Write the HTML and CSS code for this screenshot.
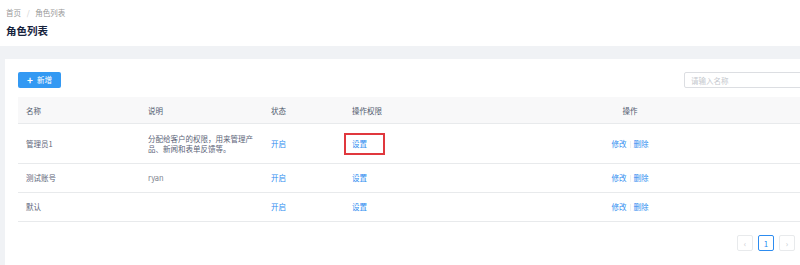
FILE: index.html
```html
<!DOCTYPE html>
<html lang="zh-CN">
<head>
    <meta charset="UTF-8">
    <meta name="viewport" content="width=device-width, initial-scale=1.0">
    <title>角色列表</title>
    <link rel="stylesheet" href="styles.css">
</head>
<body>
    <div class="page-header">
        <div class="breadcrumb">
            <span>首页</span>
            <span class="sep">/</span>
            <span>角色列表</span>
        </div>
        <h1 class="page-title">角色列表</h1>
    </div>

    <div class="card">
        <div class="toolbar">
            <button class="btn-primary"><span class="plus">+</span>新增</button>
            <input class="search" type="text" placeholder="请输入名称">
        </div>

        <table class="role-table">
            <colgroup>
                <col style="width: 122px">
                <col style="width: 123px">
                <col style="width: 81px">
                <col style="width: 116px">
                <col>
            </colgroup>
            <thead>
                <tr>
                    <th>名称</th>
                    <th>说明</th>
                    <th>状态</th>
                    <th>操作权限</th>
                    <th class="center">操作</th>
                </tr>
            </thead>
            <tbody>
                <tr class="tall">
                    <td>管理员1</td>
                    <td>分配给客户的权限，用来管理产品、新闻和表单反馈等。</td>
                    <td><a class="link">开启</a></td>
                    <td><span class="highlight"><a class="link">设置</a></span></td>
                    <td class="center"><a class="link">修改</a><span class="divider"></span><a class="link">删除</a></td>
                </tr>
                <tr>
                    <td>测试账号</td>
                    <td class="muted">ryan</td>
                    <td><a class="link">开启</a></td>
                    <td><a class="link">设置</a></td>
                    <td class="center"><a class="link">修改</a><span class="divider"></span><a class="link">删除</a></td>
                </tr>
                <tr>
                    <td>默认</td>
                    <td></td>
                    <td><a class="link">开启</a></td>
                    <td><a class="link">设置</a></td>
                    <td class="center"><a class="link">修改</a><span class="divider"></span><a class="link">删除</a></td>
                </tr>
            </tbody>
        </table>

        <div class="pager">
            <span class="page-item">&lsaquo;</span>
            <span class="page-item active">1</span>
            <span class="page-item">&rsaquo;</span>
        </div>
    </div>
</body>
</html>
```

FILE: styles.css
```css
body {
    margin: 0;
    width: 800px;
    height: 265px;
    overflow: hidden;
    background: #f0f2f5;
    font-family: "Noto Sans CJK SC", "Noto Sans", sans-serif;
    font-size: 7.5px;
    color: #5c6478;
}
.page-header {
    background: #fff;
    height: 46px;
    padding: 8px 6px 0;
    box-sizing: border-box;
}
.breadcrumb {
    color: #999;
    line-height: 9px;
    height: 9px;
}
.breadcrumb .sep {
    margin: 0 4px;
    color: #ccc;
}
.page-title {
    margin: 8px 0 0;
    font-size: 10.5px;
    line-height: 12px;
    font-weight: bold;
    color: #17233d;
}
.card {
    background: #fff;
    margin: 13px 0 0 5px;
    width: 795px;
    height: 206px;
    padding: 13px 0 0 13px;
    box-sizing: border-box;
    overflow: hidden;
}
.toolbar {
    display: flex;
    justify-content: space-between;
    align-items: center;
    width: 792px;
    height: 16px;
}
.btn-primary {
    width: 43px;
    height: 16px;
    flex-shrink: 0;
    padding: 0;
    border: none;
    border-radius: 2px;
    background: #3399f3;
    color: #fff;
    font-family: inherit;
    font-size: 7.5px;
    line-height: 16px;
    display: flex;
    align-items: center;
    justify-content: center;
}
.btn-primary .plus {
    font-size: 10px;
    font-weight: bold;
    margin-right: 4px;
}
.search {
    width: 126px;
    height: 16px;
    flex-shrink: 0;
    box-sizing: border-box;
    border: 1px solid #dcdee2;
    border-radius: 2px;
    padding: 0 6px;
    font-family: inherit;
    font-size: 7.5px;
    outline: none;
}
.search::placeholder {
    color: #c5c8ce;
}
.role-table {
    margin-top: 9px;
    width: 782px;
    border-collapse: collapse;
    table-layout: fixed;
}
.role-table th {
    background: #f8f8f9;
    height: 26px;
    padding: 0 8px;
    text-align: left;
    font-weight: normal;
    color: #515a6e;
    border-bottom: 1px solid #e8eaec;
}
.role-table td {
    height: 28px;
    padding: 0 8px;
    line-height: 10px;
    border-bottom: 1px solid #e8eaec;
    vertical-align: middle;
}
.role-table tr.tall td {
    height: 39px;
}
.role-table .center {
    text-align: center;
}
.muted {
    color: #80848f;
}
.link {
    color: #2d8cf0;
    cursor: pointer;
}
.divider {
    display: inline-block;
    width: 1px;
    height: 7px;
    background: #f0f1f3;
    margin: 0 3px;
    vertical-align: middle;
}
.highlight {
    display: inline-block;
    width: 41px;
    height: 22px;
    line-height: 18px;
    box-sizing: border-box;
    border: 2px solid #e0383e;
    padding-left: 6px;
    margin-left: -8px;
    vertical-align: middle;
}
.pager {
    display: flex;
    gap: 5px;
    width: 782px;
    justify-content: flex-end;
    margin-top: 13px;
    padding-right: 5px;
    box-sizing: border-box;
}
.page-item {
    width: 16px;
    height: 16px;
    box-sizing: border-box;
    border: 1px solid #e8eaec;
    border-radius: 2px;
    display: flex;
    align-items: center;
    justify-content: center;
    color: #c5c8ce;
    font-size: 8px;
}
.page-item.active {
    border-color: #2d8cf0;
    color: #2d8cf0;
}
```
